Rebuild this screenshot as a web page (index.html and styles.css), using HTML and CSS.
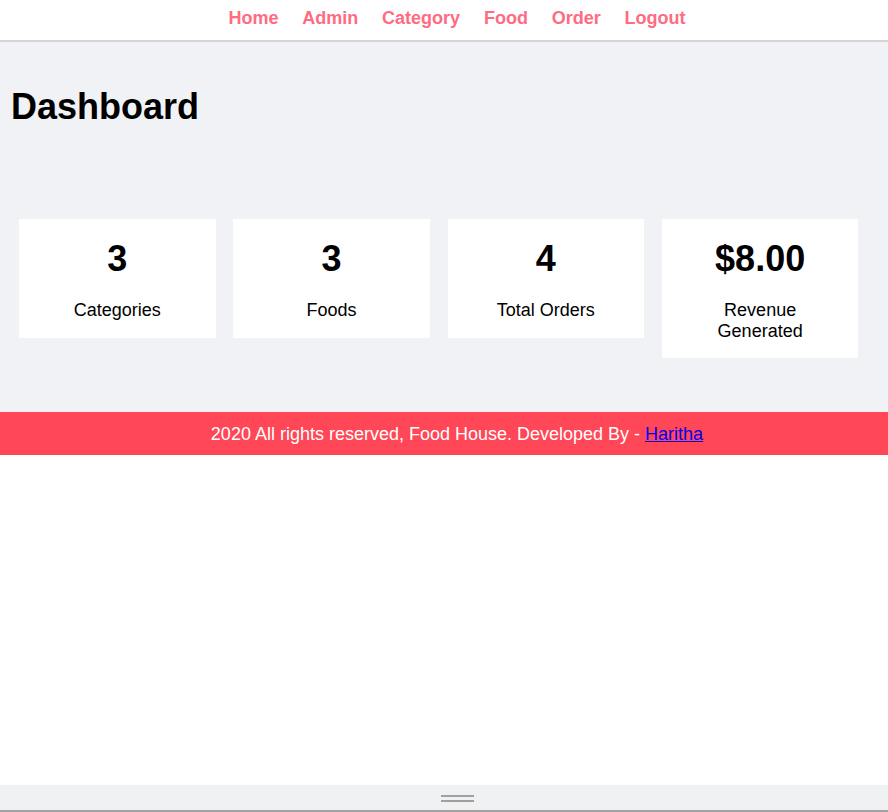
FILE: index.html
```html
<!DOCTYPE html>
<html lang="en">
<head>
<meta charset="utf-8">
<title>Food House - Dashboard</title>
<link rel="stylesheet" href="styles.css">
</head>
<body>
<nav class="menu">
  <a href="#">Home</a>
  <a href="#">Admin</a>
  <a href="#">Category</a>
  <a href="#">Food</a>
  <a href="#">Order</a>
  <a href="#">Logout</a>
</nav>
<main class="main-content">
  <h1 class="page-title">Dashboard</h1>
  <div class="cards">
    <div class="card"><h2 class="card-num">3</h2><div class="card-label">Categories</div></div>
    <div class="card"><h2 class="card-num">3</h2><div class="card-label">Foods</div></div>
    <div class="card"><h2 class="card-num">4</h2><div class="card-label">Total Orders</div></div>
    <div class="card"><h2 class="card-num">$8.00</h2><div class="card-label">Revenue<br>Generated</div></div>
  </div>
</main>
<footer class="footer">
  <p class="footer-text">2020 All rights reserved, Food House. Developed By - <a href="#" class="footer-link">Haritha</a></p>
</footer>
<div class="resize-bar"><span class="handle"></span></div>
</body>
</html>
```
FILE: styles.css
```css
* { box-sizing: border-box; }
html, body {
  margin: 0;
  padding: 0;
  background: #ffffff;
  font-family: "Liberation Sans", Arial, sans-serif;
  color: #000;
}
.menu {
  display: flex;
  justify-content: center;
  gap: 23.8px;
  padding: 8px 0 0 26px;
  height: 42px;
  border-bottom: 2px solid #d4d4d6;
  background: #fff;
}
.menu a {
  color: #ff6b81;
  font-weight: bold;
  font-size: 18px;
  line-height: 20.7px;
  text-decoration: none;
}
.main-content {
  background: #f1f2f6;
  padding: 20px 0 54px 11px;
}
.page-title {
  margin: 24px 0 92px 0;
  font-size: 36px;
  line-height: 41.4px;
  font-weight: bold;
}
.cards {
  display: flex;
  align-items: flex-start;
  gap: 17.7px;
  padding-left: 8px;
}
.card {
  width: 196.6px;
  background: #fff;
  text-align: center;
  padding: 19px 0 17px;
}
.card-num {
  margin: 0 0 20px 0;
  font-size: 36px;
  line-height: 41.4px;
  font-weight: bold;
}
.card-label {
  font-size: 18px;
  line-height: 20.7px;
}
.footer {
  background: #ff4757;
  height: 43px;
  padding: 11.5px 0 0 26px;
  text-align: center;
}
.footer-text {
  margin: 0;
  color: #fff;
  font-size: 18px;
  line-height: 20.7px;
}
.footer-link {
  color: #0000ee;
}
.resize-bar {
  position: fixed;
  left: 0;
  right: 0;
  bottom: 0;
  height: 27px;
  background: #f0f1f3;
  border-bottom: 2px solid #a3a3a3;
  display: flex;
  justify-content: center;
  padding: 10px 0 0 26px;
}
.handle {
  display: block;
  width: 33px;
  height: 7px;
  border-top: 2px solid #a0a0a0;
  border-bottom: 2px solid #a0a0a0;
}
```
